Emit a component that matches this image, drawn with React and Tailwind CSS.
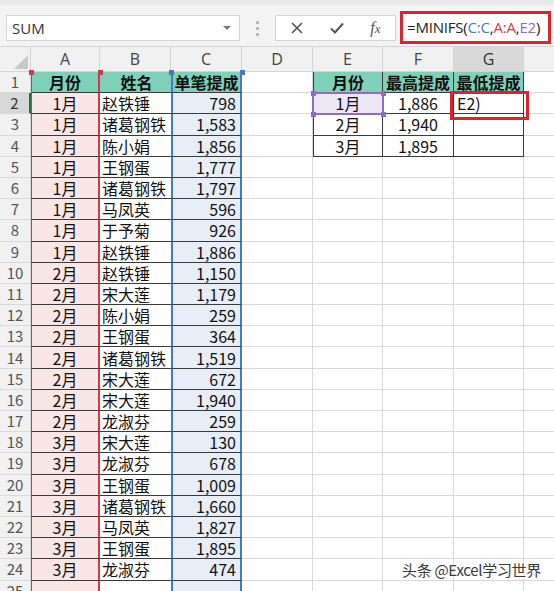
import React from "react";

const COLS = [
  { k: "A", w: 69 },
  { k: "B", w: 71 },
  { k: "C", w: 71 },
  { k: "D", w: 71 },
  { k: "E", w: 70 },
  { k: "F", w: 71 },
  { k: "G", w: 70 },
  { k: "", w: 30 },
];

const DATA = [
  ["1月", "赵铁锤", "798"],
  ["1月", "诸葛钢铁", "1,583"],
  ["1月", "陈小娟", "1,856"],
  ["1月", "王钢蛋", "1,777"],
  ["1月", "诸葛钢铁", "1,797"],
  ["1月", "马凤英", "596"],
  ["1月", "于予菊", "926"],
  ["1月", "赵铁锤", "1,886"],
  ["2月", "赵铁锤", "1,150"],
  ["2月", "宋大莲", "1,179"],
  ["2月", "陈小娟", "259"],
  ["2月", "王钢蛋", "364"],
  ["2月", "诸葛钢铁", "1,519"],
  ["2月", "宋大莲", "672"],
  ["2月", "宋大莲", "1,940"],
  ["2月", "龙淑芬", "259"],
  ["3月", "宋大莲", "130"],
  ["3月", "龙淑芬", "678"],
  ["3月", "王钢蛋", "1,009"],
  ["3月", "诸葛钢铁", "1,660"],
  ["3月", "马凤英", "1,827"],
  ["3月", "王钢蛋", "1,895"],
  ["3月", "龙淑芬", "474"],
];

const SUMMARY = [
  ["月份", "最高提成", "最低提成"],
  ["1月", "1,886", "E2)"],
  ["2月", "1,940", ""],
  ["3月", "1,895", ""],
];

function Cell({ w, className = "", children }) {
  return (
    <div
      style={{ width: w }}
      className={"shrink-0 h-full flex items-center whitespace-nowrap leading-[16px] " + className}
    >
      {children}
    </div>
  );
}

function Row({ n }) {
  const d = n >= 2 && n <= 24 ? DATA[n - 2] : null;
  const s = n >= 1 && n <= 4 ? SUMMARY[n - 1] : null;
  const head = n === 1;
  const teal = "bg-[#7fd0b8] font-bold justify-center";
  const selected = n === 2;
  return (
    <div className="flex h-[21.2px] text-[16px] leading-[16px] text-[#111]">
      <Cell
        w={31}
        className={
          "justify-center text-[15px] border-b border-[#d9d9d9] " +
          (selected
            ? "bg-[#d7d7d7] text-[#333] border-r-2 border-r-[#217346]"
            : "bg-[#f1f1f1] text-[#555] border-r border-r-[#d4d4d4]")
        }
      >
        {n}
      </Cell>
      <Cell
        w={69}
        className={
          "justify-center border-l border-l-[#d23b4a] border-r-2 border-r-[#d23b4a] border-b " +
          (n <= 24 ? "border-b-[#3a3a3a] " : "border-b-[#d9d9d9] ") +
          (head ? teal : "bg-[#fbe6e6]")
        }
      >
        {head ? "月份" : d ? d[0] : ""}
      </Cell>
      <Cell
        w={71}
        className={
          "border-b pl-[2px] " +
          (n <= 24 ? "border-b-[#3a3a3a] " : "border-b-[#d9d9d9] ") +
          (head ? teal : "bg-white")
        }
      >
        {head ? "姓名" : d ? d[1] : ""}
      </Cell>
      <Cell
        w={71}
        className={
          "border-l-2 border-l-[#4a78c8] border-r-2 border-r-[#4a78c8] border-b " +
          (n <= 24 ? "border-b-[#3a3a3a] " : "border-b-[#d9d9d9] ") +
          (head ? teal : "bg-[#e8eef8] justify-end pr-[4px]")
        }
      >
        {head ? "单笔提成" : d ? d[2] : ""}
      </Cell>
      <Cell w={71} className="border-r border-b border-[#d9d9d9]" />
      <Cell
        w={70}
        className={
          s
            ? "justify-center border-l border-r border-b border-[#3a3a3a] " +
              (head ? teal : n === 2 ? "bg-[#ede7f5]" : "bg-white")
            : "border-r border-b border-[#d9d9d9]"
        }
      >
        {s ? s[0] : ""}
      </Cell>
      <Cell
        w={71}
        className={
          s
            ? "justify-center border-r border-b border-[#3a3a3a] " + (head ? teal : "bg-white")
            : "border-r border-b border-[#d9d9d9]"
        }
      >
        {s ? s[1] : ""}
      </Cell>
      <Cell
        w={70}
        className={
          s
            ? "border-r border-b border-[#3a3a3a] " + (head ? teal : "bg-white pl-[3px]")
            : "border-r border-b border-[#d9d9d9]"
        }
      >
        {s ? s[2] : ""}
      </Cell>
      <Cell w={30} className="border-b border-[#d9d9d9]" />
    </div>
  );
}

function Handle({ x, y, color }) {
  return (
    <div
      className="absolute w-[5px] h-[5px]"
      style={{ left: x - 2.5, top: y - 2.5, backgroundColor: color }}
    />
  );
}

export default function App() {
  const rows = [];
  for (let i = 1; i <= 25; i++) rows.push(<Row key={i} n={i} />);
  return (
    <div
      className="relative w-[554px] h-[591px] overflow-hidden bg-white"
      style={{ fontFamily: '"Noto Sans CJK SC", "Noto Sans", sans-serif' }}
    >
      <div className="h-[47px] bg-[#f3f3f3] border-b border-[#d4d4d4] relative">
        <div className="h-[5px] bg-[#e9e9e9]" />
        <div className="flex items-start pt-[10px]">
          <div className="ml-[6px] w-[234px] h-[26px] bg-white border border-[#d4d4d4] flex items-center justify-between pl-[5px] pr-[8px]">
            <span
              className="text-[15px] leading-none text-[#333]"
              style={{ fontFamily: '"Open Sans", "Noto Sans", sans-serif' }}
            >
              SUM
            </span>
            <svg width="8" height="5" viewBox="0 0 8 5">
              <path d="M0 0 L8 0 L4 4 Z" fill="#777" />
            </svg>
          </div>
          <div className="w-[35px] h-[26px] flex flex-col items-center justify-center gap-[3px]">
            <div className="w-[3px] h-[3px] rounded-full bg-[#aaa]" />
            <div className="w-[3px] h-[3px] rounded-full bg-[#aaa]" />
            <div className="w-[3px] h-[3px] rounded-full bg-[#aaa]" />
          </div>
          <div className="w-[121px] h-[26px] bg-white border border-[#d4d4d4] flex items-center justify-around px-[2px]">
            <svg width="14" height="14" viewBox="0 0 14 14">
              <path d="M2 2 L12 12 M12 2 L2 12" stroke="#555" strokeWidth="1.6" />
            </svg>
            <svg width="16" height="14" viewBox="0 0 16 14">
              <path d="M2 7.5 L6 11.5 L14 2.5" stroke="#555" strokeWidth="2" fill="none" />
            </svg>
            <span
              className="text-[16px] leading-none italic text-[#555]"
              style={{ fontFamily: '"Liberation Serif", serif' }}
            >
              f<span className="text-[13px]">x</span>
            </span>
          </div>
          <div className="ml-[4px] -mt-[4px] w-[151px] h-[33px] bg-white border-[3px] border-[#d9262e] flex items-center pl-[4px]">
            <span
              className="text-[15px] leading-none text-[#222] tracking-[-0.2px]"
              style={{ fontFamily: '"Open Sans", "Noto Sans", sans-serif' }}
            >
              =MINIFS(<span className="text-[#4a78c8]">C:C</span>,
              <span className="text-[#d23b4a]">A:A</span>,
              <span className="text-[#8e6cc0]">E2</span>)
            </span>
          </div>
        </div>
      </div>

      <div
        className="flex h-[25px] text-[16px] leading-none text-[#444]"
        style={{ fontFamily: '"Open Sans", "Noto Sans", sans-serif' }}
      >
        <div className="w-[31px] shrink-0 h-full bg-[#f1f1f1] border-r border-b border-[#d4d4d4] relative">
          <svg className="absolute right-[2px] bottom-[2px]" width="14" height="14" viewBox="0 0 14 14">
            <path d="M14 0 L14 14 L0 14 Z" fill="#c8c8c8" />
          </svg>
        </div>
        {COLS.map((c, i) => (
          <div
            key={i}
            style={{ width: c.w }}
            className={
              "shrink-0 h-full flex items-center justify-center border-b border-[#d4d4d4] " +
              (c.k ? "border-r " : "") +
              (c.k === "G" ? "bg-[#d9d9d9] text-[#333]" : "bg-[#f1f1f1]")
            }
          >
            {c.k}
          </div>
        ))}
      </div>

      <div className="relative">
        {rows}
        <Handle x={31} y={0} color="#d23b4a" />
        <Handle x={100} y={0} color="#d23b4a" />
        <Handle x={171} y={0} color="#4a78c8" />
        <Handle x={242} y={0} color="#4a78c8" />
        <Handle x={313} y={21.2} color="#8e6cc0" />
        <Handle x={383} y={21.2} color="#8e6cc0" />
        <Handle x={313} y={42.4} color="#8e6cc0" />
        <Handle x={383} y={42.4} color="#8e6cc0" />
        <div className="absolute left-[312px] top-[20.2px] w-[72px] h-[23.2px] border-2 border-[#8e6cc0]" />
        <div className="absolute left-[450px] top-[18.5px] w-[79px] h-[29px] border-[3px] border-[#d9262e]" />
      </div>

      <div
        className="absolute left-[402px] top-[562px] text-[15px] leading-none text-[#3a3a3a] tracking-[-0.3px]"
        style={{ textShadow: "1px 1px 0 #fff, -1px -1px 0 #fff" }}
      >
        头条 @Excel学习世界
      </div>
    </div>
  );
}
